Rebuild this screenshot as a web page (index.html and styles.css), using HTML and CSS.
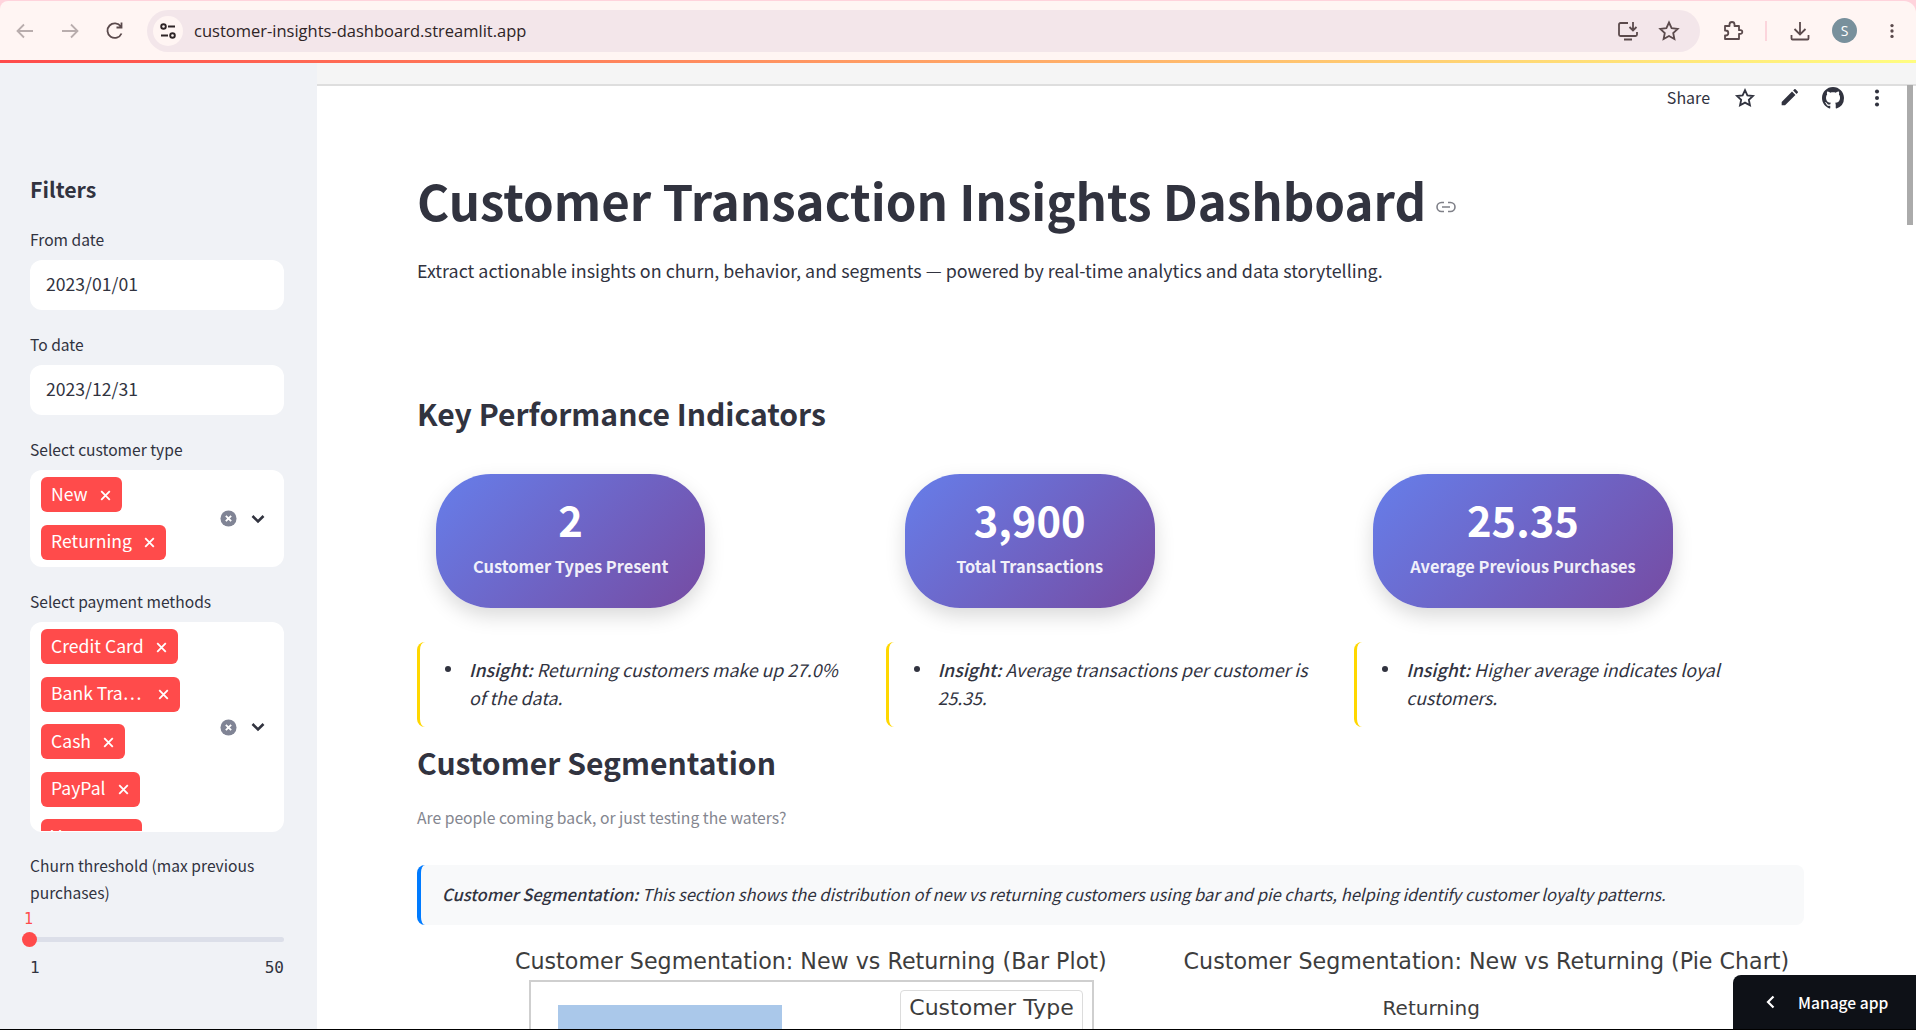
FILE: index.html
```html
<!DOCTYPE html>
<html lang="en">
<head>
  <meta charset="UTF-8">
  <title>Customer Transaction Insights Dashboard</title>
  <link rel="stylesheet" href="styles.css">
</head>
<body>
  <header class="chrome">
    <div class="nav-icons">
      <svg class="ico dim" viewBox="0 0 24 24"><path d="M20 12H5M11 5.5 4.5 12l6.500 6.500"/></svg>
      <svg class="ico dim" viewBox="0 0 24 24"><path d="M4 12h15M13 5.500l6.500 6.500-6.500 6.500"/></svg>
      <svg class="ico" viewBox="0 0 24 24"><path d="M18.500 14.500A7.300 7.300 0 1 1 17.800 7.500M18.500 3.500v5h-5"/></svg>
    </div>
    <div class="omnibox">
      <span class="site-info">
        <svg viewBox="0 0 20 20"><circle cx="5.500" cy="5.500" r="2.300"/><path d="M10 5.500h7M3 14.500h7"/><circle cx="14.500" cy="14.500" r="2.300"/></svg>
      </span>
      <span class="url">customer-insights-dashboard.streamlit.app</span>
      <span class="omni-right">
        <svg class="ico" viewBox="0 0 24 24"><path d="M12 4H4.500A1.500 1.500 0 0 0 3 5.500v10A1.500 1.500 0 0 0 4.500 17h15a1.500 1.500 0 0 0 1.500-1.500V13M17 3v8M13.500 8l3.500 3.500L20.500 8M8 20.500h8"/></svg>
        <svg class="ico" viewBox="0 0 24 24"><path d="m12 3.500 2.600 5.600 6.100.7-4.500 4.200 1.200 6-5.400-3-5.400 3 1.200-6-4.500-4.200 6.100-.7z"/></svg>
      </span>
    </div>
    <div class="chrome-right">
      <svg class="ico" viewBox="0 0 24 24"><path d="M4 7h4.500V5.500a2.500 2.500 0 0 1 5 0V7H18v4.200h1.500a1.800 1.800 0 0 1 0 3.600H18V20H4v-3.500h.8a2.500 2.500 0 0 0 0-5H4z" stroke-linejoin="round"/></svg>
      <span class="chrome-divider"></span>
      <svg class="ico" viewBox="0 0 24 24"><path d="M12 3v12M6.500 10l5.500 5.500 5.500-5.500M3.500 16v3.500a1 1 0 0 0 1 1h15a1 1 0 0 0 1-1V16"/></svg>
      <span class="avatar">S</span>
      <svg class="kebab" viewBox="0 0 24 24"><circle cx="12" cy="5.500" r="2"/><circle cx="12" cy="12" r="2"/><circle cx="12" cy="18.500" r="2"/></svg>
    </div>
  </header>
  <div class="decoration"></div>

  <div class="app">
    <aside class="sidebar">
      <h2 class="side-title">Filters</h2>

      <label class="field-label">From date</label>
      <div class="date-input">2023/01/01</div>

      <label class="field-label">To date</label>
      <div class="date-input">2023/12/31</div>

      <label class="field-label">Select customer type</label>
      <div class="multi multi-short">
        <div class="tags">
          <span class="tag">New <svg viewBox="0 0 9 9"><path d="m1 1 7 7m0-7-7 7"/></svg></span>
          <span class="tag">Returning <svg viewBox="0 0 9 9"><path d="m1 1 7 7m0-7-7 7"/></svg></span>
        </div>
        <div class="multi-icons">
          <svg class="clear" viewBox="0 0 18 18"><circle cx="9" cy="9" r="8.500"/><path d="m6.200 6.200 5.600 5.600m0-5.600-5.600 5.600"/></svg>
          <svg class="chev" viewBox="0 0 16 16"><path d="m2.500 5 5.500 5.500L13.500 5"/></svg>
        </div>
      </div>

      <label class="field-label">Select payment methods</label>
      <div class="multi multi-tall">
        <div class="tags">
          <span class="tag">Credit Card <svg viewBox="0 0 9 9"><path d="m1 1 7 7m0-7-7 7"/></svg></span>
          <span class="tag tag-cut">Bank Tra… <svg viewBox="0 0 9 9"><path d="m1 1 7 7m0-7-7 7"/></svg></span>
          <span class="tag">Cash <svg viewBox="0 0 9 9"><path d="m1 1 7 7m0-7-7 7"/></svg></span>
          <span class="tag">PayPal <svg viewBox="0 0 9 9"><path d="m1 1 7 7m0-7-7 7"/></svg></span>
          <span class="tag">Venmo <svg viewBox="0 0 9 9"><path d="m1 1 7 7m0-7-7 7"/></svg></span>
        </div>
        <div class="multi-icons">
          <svg class="clear" viewBox="0 0 18 18"><circle cx="9" cy="9" r="8.500"/><path d="m6.200 6.200 5.600 5.600m0-5.600-5.600 5.600"/></svg>
          <svg class="chev" viewBox="0 0 16 16"><path d="m2.500 5 5.500 5.500L13.500 5"/></svg>
        </div>
      </div>

      <label class="field-label churn-label">Churn threshold (max previous purchases)</label>
      <div class="slider-value">1</div>
      <div class="slider"><span class="thumb"></span></div>
      <div class="slider-ends"><span>1</span><span>50</span></div>

      <h2 class="side-title trends">Trends Chart</h2>
    </aside>

    <main class="main">
      <div class="top-band"></div>
      <div class="toolbar">
        <span class="share">Share</span>
        <svg class="tool-ico" viewBox="0 0 24 24"><path class="line" d="m12 3.500 2.600 5.600 6.100.7-4.500 4.200 1.200 6-5.400-3-5.400 3 1.200-6-4.500-4.200 6.100-.7z"/></svg>
        <svg class="tool-ico" viewBox="0 0 24 24"><path d="M4 20v-3.700L15.300 5l3.700 3.700L7.700 20zM16.500 3.800l1.300-1.300a1 1 0 0 1 1.400 0l2.300 2.300a1 1 0 0 1 0 1.400l-1.300 1.300z"/></svg>
        <svg class="tool-ico" viewBox="0 0 16 16"><path d="M8 0C3.580 0 0 3.580 0 8c0 3.540 2.290 6.530 5.470 7.590.4.070.55-.17.55-.38 0-.19-.01-.82-.01-1.490-2.010.37-2.530-.49-2.690-.94-.09-.23-.48-.94-.82-1.130-.28-.15-.68-.52-.01-.53.630-.01 1.080.58 1.230.82.720 1.210 1.870.87 2.330.66.070-.52.280-.87.510-1.070-1.780-.2-3.640-.89-3.640-3.950 0-.87.310-1.590.820-2.150-.08-.2-.36-1.020.08-2.120 0 0 .67-.21 2.200.82.640-.18 1.320-.27 2-.27s1.360.09 2 .27c1.530-1.040 2.200-.82 2.200-.82.440 1.100.16 1.920.08 2.120.51.560.82 1.270.82 2.150 0 3.070-1.870 3.750-3.650 3.950.29.250.54.730.54 1.480 0 1.070-.01 1.930-.01 2.200 0 .21.150.46.550.38A8.010 8.010 0 0 0 16 8c0-4.420-3.580-8-8-8z"/></svg>
        <svg class="tool-ico" viewBox="0 0 24 24"><circle cx="12" cy="5" r="2.200"/><circle cx="12" cy="12" r="2.200"/><circle cx="12" cy="19" r="2.200"/></svg>
      </div>

      <div class="content">
        <div class="title-row">
          <h1 class="page-title">Customer Transaction Insights Dashboard</h1>
          <svg class="anchor" viewBox="0 0 20 12"><path d="M8 1.500H5.500a4.500 4.500 0 0 0 0 9H8M12 1.500h2.500a4.500 4.500 0 0 1 0 9H12M6 6h8"/></svg>
        </div>
        <p class="subtitle">Extract actionable insights on churn, behavior, and segments — powered by real-time analytics and data storytelling.</p>

        <h2 class="section-title kpi-title">Key Performance Indicators</h2>

        <div class="kpi-grid">
          <div class="kpi-col">
            <div class="kpi-card">
              <div class="kpi-value">2</div>
              <div class="kpi-label">Customer Types Present</div>
            </div>
            <ul class="insight"><li><em><strong>Insight:</strong> Returning customers make up 27.0% of the data.</em></li></ul>
          </div>
          <div class="kpi-col">
            <div class="kpi-card">
              <div class="kpi-value">3,900</div>
              <div class="kpi-label">Total Transactions</div>
            </div>
            <ul class="insight"><li><em><strong>Insight:</strong> Average transactions per customer is 25.35.</em></li></ul>
          </div>
          <div class="kpi-col">
            <div class="kpi-card">
              <div class="kpi-value">25.35</div>
              <div class="kpi-label">Average Previous Purchases</div>
            </div>
            <ul class="insight"><li><em><strong>Insight:</strong> Higher average indicates loyal customers.</em></li></ul>
          </div>
        </div>

        <h2 class="section-title seg-title">Customer Segmentation</h2>
        <p class="caption">Are people coming back, or just testing the waters?</p>
        <div class="info-box"><em><strong>Customer Segmentation:</strong> This section shows the distribution of new vs returning customers using bar and pie charts, helping identify customer loyalty patterns.</em></div>

        <div class="charts">
          <div class="chart chart-bar">
            <div class="chart-title">Customer Segmentation: New vs Returning (Bar Plot)</div>
            <div class="plot">
              <div class="bar"></div>
              <div class="legend">Customer Type</div>
            </div>
          </div>
          <div class="chart chart-pie">
            <div class="chart-title">Customer Segmentation: New vs Returning (Pie Chart)</div>
            <div class="pie-label">Returning</div>
          </div>
        </div>
      </div>

      <div class="scroll-thumb"></div>
    </main>
  </div>

  <div class="manage-app">
    <svg viewBox="0 0 12 16"><path d="M8.500 2.500 3 8l5.500 5.500"/></svg>
    <span>Manage app</span>
  </div>
</body>
</html>
```

FILE: styles.css
```css
* {
  box-sizing: border-box;
}

html,
body {
  margin: 0;
  height: 100%;
  overflow: hidden;
}

body {
  display: flex;
  flex-direction: column;
  padding-top: 1px;
  font-family: "Noto Sans CJK SC", "Source Sans Pro", "Noto Sans", sans-serif;
  color: #31333f;
  background: #ffd3dc;
  border-bottom: 1px solid #000;
}

/* browser bar */
.chrome {
  height: 59px;
  flex: none;
  display: flex;
  align-items: center;
  border-radius: 8px 12px 0 0;
  background: #fff5f3;
  font-family: "Open Sans", sans-serif;
}

.ico {
  width: 24px;
  height: 24px;
  fill: none;
  stroke: #5b4a4c;
  stroke-width: 1.8;
}

.ico.dim {
  stroke: #b9adad;
}

.nav-icons {
  width: 147px;
  padding-left: 13px;
  display: flex;
  gap: 21px;
}

.omnibox {
  width: 1553px;
  height: 42px;
  display: flex;
  align-items: center;
  padding-left: 6px;
  border-radius: 21px;
  background: #f3e6ea;
}

.site-info {
  width: 30px;
  height: 30px;
  border-radius: 50%;
  background: #fff5f3;
  display: flex;
  align-items: center;
  justify-content: center;
}

.site-info svg {
  width: 20px;
  height: 20px;
  fill: none;
  stroke: #2e2426;
  stroke-width: 1.9;
}

.url {
  margin-left: 11px;
  font-size: 16.500px;
  color: #2e2426;
}

.omni-right {
  margin-left: auto;
  padding-right: 19px;
  display: flex;
  gap: 17px;
}

.chrome-right {
  flex: 1;
  display: flex;
  align-items: center;
  padding-left: 21px;
}

.chrome-divider {
  width: 2px;
  height: 20px;
  margin: 0 21px 0 20px;
  background: #fcd5dc;
}

.avatar {
  width: 25px;
  height: 25px;
  margin-left: 20px;
  border-radius: 50%;
  background: #78909c;
  color: #fff;
  font-size: 14px;
  line-height: 25px;
  text-align: center;
}

.kebab {
  width: 20px;
  height: 20px;
  margin-left: 25px;
  fill: #5b4a4c;
}

.decoration {
  height: 3px;
  flex: none;
  background: linear-gradient(90deg, #ff4b4b, #fffd80);
}

.app {
  flex: 1;
  min-height: 0;
  display: flex;
  background: #fff;
}

/* sidebar */
.sidebar {
  width: 317px;
  flex: none;
  overflow: hidden;
  padding: 109px 33px 0 30px;
  background: #f0f2f6;
}

.side-title {
  margin: 0;
  font-size: 21.300px;
  line-height: 34px;
  font-weight: 600;
}

.field-label {
  display: block;
  margin: 22px 0 9px;
  font-size: 15.600px;
  line-height: 24px;
}

.side-title + .field-label {
  margin-top: 21px;
}

.date-input {
  height: 50px;
  padding-left: 16px;
  border-radius: 12px;
  background: #fff;
  font-size: 17.600px;
  line-height: 48px;
}

.multi {
  display: flex;
  justify-content: space-between;
  overflow: hidden;
  padding: 7px 0 0 11px;
  border-radius: 12px;
  background: #fff;
}

.multi-short {
  height: 97px;
}

.multi-tall {
  height: 210px;
}

.tags {
  display: flex;
  flex-direction: column;
  align-items: flex-start;
  gap: 12.500px;
  overflow: hidden;
  margin-bottom: 1px;
}

.tag {
  height: 35px;
  flex: none;
  display: flex;
  align-items: center;
  gap: 12px;
  padding: 0 11px 3px 10px;
  border-radius: 6px;
  background: #ff4b4b;
  color: #fff;
  font-size: 17.600px;
  white-space: nowrap;
}

.tag svg {
  width: 11px;
  height: 11px;
  margin-top: 4px;
  fill: none;
  stroke: #fff;
  stroke-width: 1.500;
}

.tag-cut {
  gap: 17px;
}

.multi-icons {
  display: flex;
  align-items: center;
  gap: 13px;
  padding-right: 18px;
  margin-top: -7px;
}

.clear {
  width: 17px;
  height: 17px;
  fill: #808495;
  stroke: #fff;
  stroke-width: 0;
}

.clear path {
  stroke-width: 2;
  fill: none;
}

.chev {
  width: 16px;
  height: 16px;
  fill: none;
  stroke: #31333f;
  stroke-width: 2.600;
}

.multi + .churn-label {
  margin: 20px 0 0;
  line-height: 27px;
}

.slider-value {
  margin: 2px 0 0 -6px;
  height: 22px;
  font: 15px/22px "DejaVu Sans Mono", "Liberation Mono", monospace;
  color: #ff4b4b;
}

.slider {
  position: relative;
  height: 5px;
  margin-top: 7px;
  border-radius: 3px;
  background: #dcdfe9;
}

.thumb {
  position: absolute;
  left: -8px;
  top: -5px;
  width: 15px;
  height: 15px;
  border-radius: 50%;
  background: #ff4b4b;
}

.slider-ends {
  display: flex;
  justify-content: space-between;
  margin-top: 15px;
  font: 16px/22px "DejaVu Sans Mono", "Liberation Mono", monospace;
}

.trends {
  margin-top: 41px;
}

/* main */
.main {
  position: relative;
  flex: 1;
  min-width: 0;
  overflow: hidden;
}

.top-band {
  height: 23px;
  background: #f5f5f5;
  border-bottom: 2px solid #dedede;
}

.toolbar {
  height: 24px;
  display: flex;
  align-items: center;
  justify-content: flex-end;
  gap: 22px;
  padding-right: 28px;
}

.share {
  margin: 0 2px 2px 0;
  font-size: 16px;
  color: #31333f;
}

.tool-ico {
  width: 22px;
  height: 22px;
  fill: #31333f;
}

.tool-ico .line {
  fill: none;
  stroke: #31333f;
  stroke-width: 2;
}

.content {
  padding: 0 112px 0 100px;
}

.title-row {
  display: flex;
  align-items: center;
  margin-top: 55px;
}

.page-title {
  margin: 0;
  font-size: 49.200px;
  line-height: 70px;
  font-weight: 700;
  white-space: nowrap;
}

.anchor {
  width: 20px;
  height: 12px;
  margin: 14px 0 0 10px;
  fill: none;
  stroke: #7f8088;
  stroke-width: 1.600;
}

.subtitle {
  margin: 21px 0 0;
  font-size: 17.900px;
  line-height: 28px;
}

.section-title {
  margin: 0;
  font-weight: 600;
  font-size: 30.100px;
  line-height: 40px;
}

.kpi-title {
  margin-top: 109px;
}

.kpi-grid {
  display: grid;
  grid-template-columns: repeat(3, 1fr);
  gap: 19px;
  margin-top: 41px;
}

.kpi-card {
  display: inline-block;
  min-width: 250px;
  height: 134px;
  margin-left: 19px;
  padding: 21px 37px 0;
  border-radius: 55px;
  background: linear-gradient(135deg, #667eea, #764ba2);
  box-shadow: 0 8px 20px rgba(0, 0, 0, 0.15);
  color: #fff;
  text-align: center;
}

.kpi-value {
  font-size: 41.700px;
  line-height: 48px;
  font-weight: 700;
}

.kpi-label {
  margin-top: 10px;
  font-size: 16.400px;
  line-height: 26px;
  font-weight: 600;
  opacity: 0.9;
}

.insight {
  height: 85px;
  margin: 34px 0 0;
  padding: 13px 18px 0 49px;
  border-left: 3px solid #ffd700;
  border-radius: 8px;
  font-size: 17.700px;
  line-height: 28px;
  list-style: none;
}

.insight li {
  position: relative;
}

.insight li::before {
  content: "";
  position: absolute;
  left: -24px;
  top: 11px;
  width: 6px;
  height: 6px;
  border-radius: 50%;
  background: #31333f;
}

.insight strong {
  font-weight: 500;
}

.seg-title {
  margin-top: 15px;
}

.caption {
  margin: 24px 0 0;
  font-size: 15.700px;
  line-height: 24px;
  color: #84868f;
}

.info-box {
  height: 60px;
  margin-top: 35px;
  padding-left: 21px;
  border-left: 4px solid #007bff;
  border-radius: 8px;
  background: #f8f9fa;
  font-size: 16.550px;
  line-height: 58px;
  white-space: nowrap;
}

.info-box strong {
  font-weight: 500;
}

.charts {
  display: grid;
  grid-template-columns: 1fr 1fr;
  gap: 16px;
  margin-top: 22px;
  font-family: "DejaVu Sans", sans-serif;
  color: #3d3d3d;
}

.chart-title {
  font-size: 22.200px;
  line-height: 28px;
  white-space: nowrap;
}

.chart-bar {
  padding-left: 98px;
}

.chart-pie {
  padding-left: 61px;
}

.plot {
  position: relative;
  height: 80px;
  width: 565px;
  margin: 5px 0 0 14px;
  border: 2px solid #cfcfcf;
}

.bar {
  width: 224px;
  height: 60px;
  margin: 23px 0 0 27px;
  background: #aac8ea;
}

.legend {
  position: absolute;
  top: 8px;
  right: 9px;
  width: 183px;
  height: 60px;
  padding-top: 2px;
  border: 1px solid #dcdcdc;
  border-radius: 4px;
  background: #fff;
  font-size: 22px;
  line-height: 30px;
  text-align: center;
}

.pie-label {
  margin: 19px 0 0 199px;
  font-size: 20px;
  line-height: 28px;
}

.scroll-thumb {
  position: absolute;
  top: 22px;
  right: 3px;
  width: 6px;
  height: 140px;
  background: #ababab;
}

.manage-app {
  position: fixed;
  right: 0;
  bottom: 1px;
  width: 183px;
  height: 54px;
  display: flex;
  align-items: center;
  padding-left: 32px;
  gap: 21px;
  border-top-left-radius: 8px;
  background: #0e1117;
  color: #fff;
  font-size: 15.600px;
  font-weight: 500;
}

.manage-app svg {
  width: 12px;
  height: 16px;
  fill: none;
  stroke: #fff;
  stroke-width: 2.200;
}
```
